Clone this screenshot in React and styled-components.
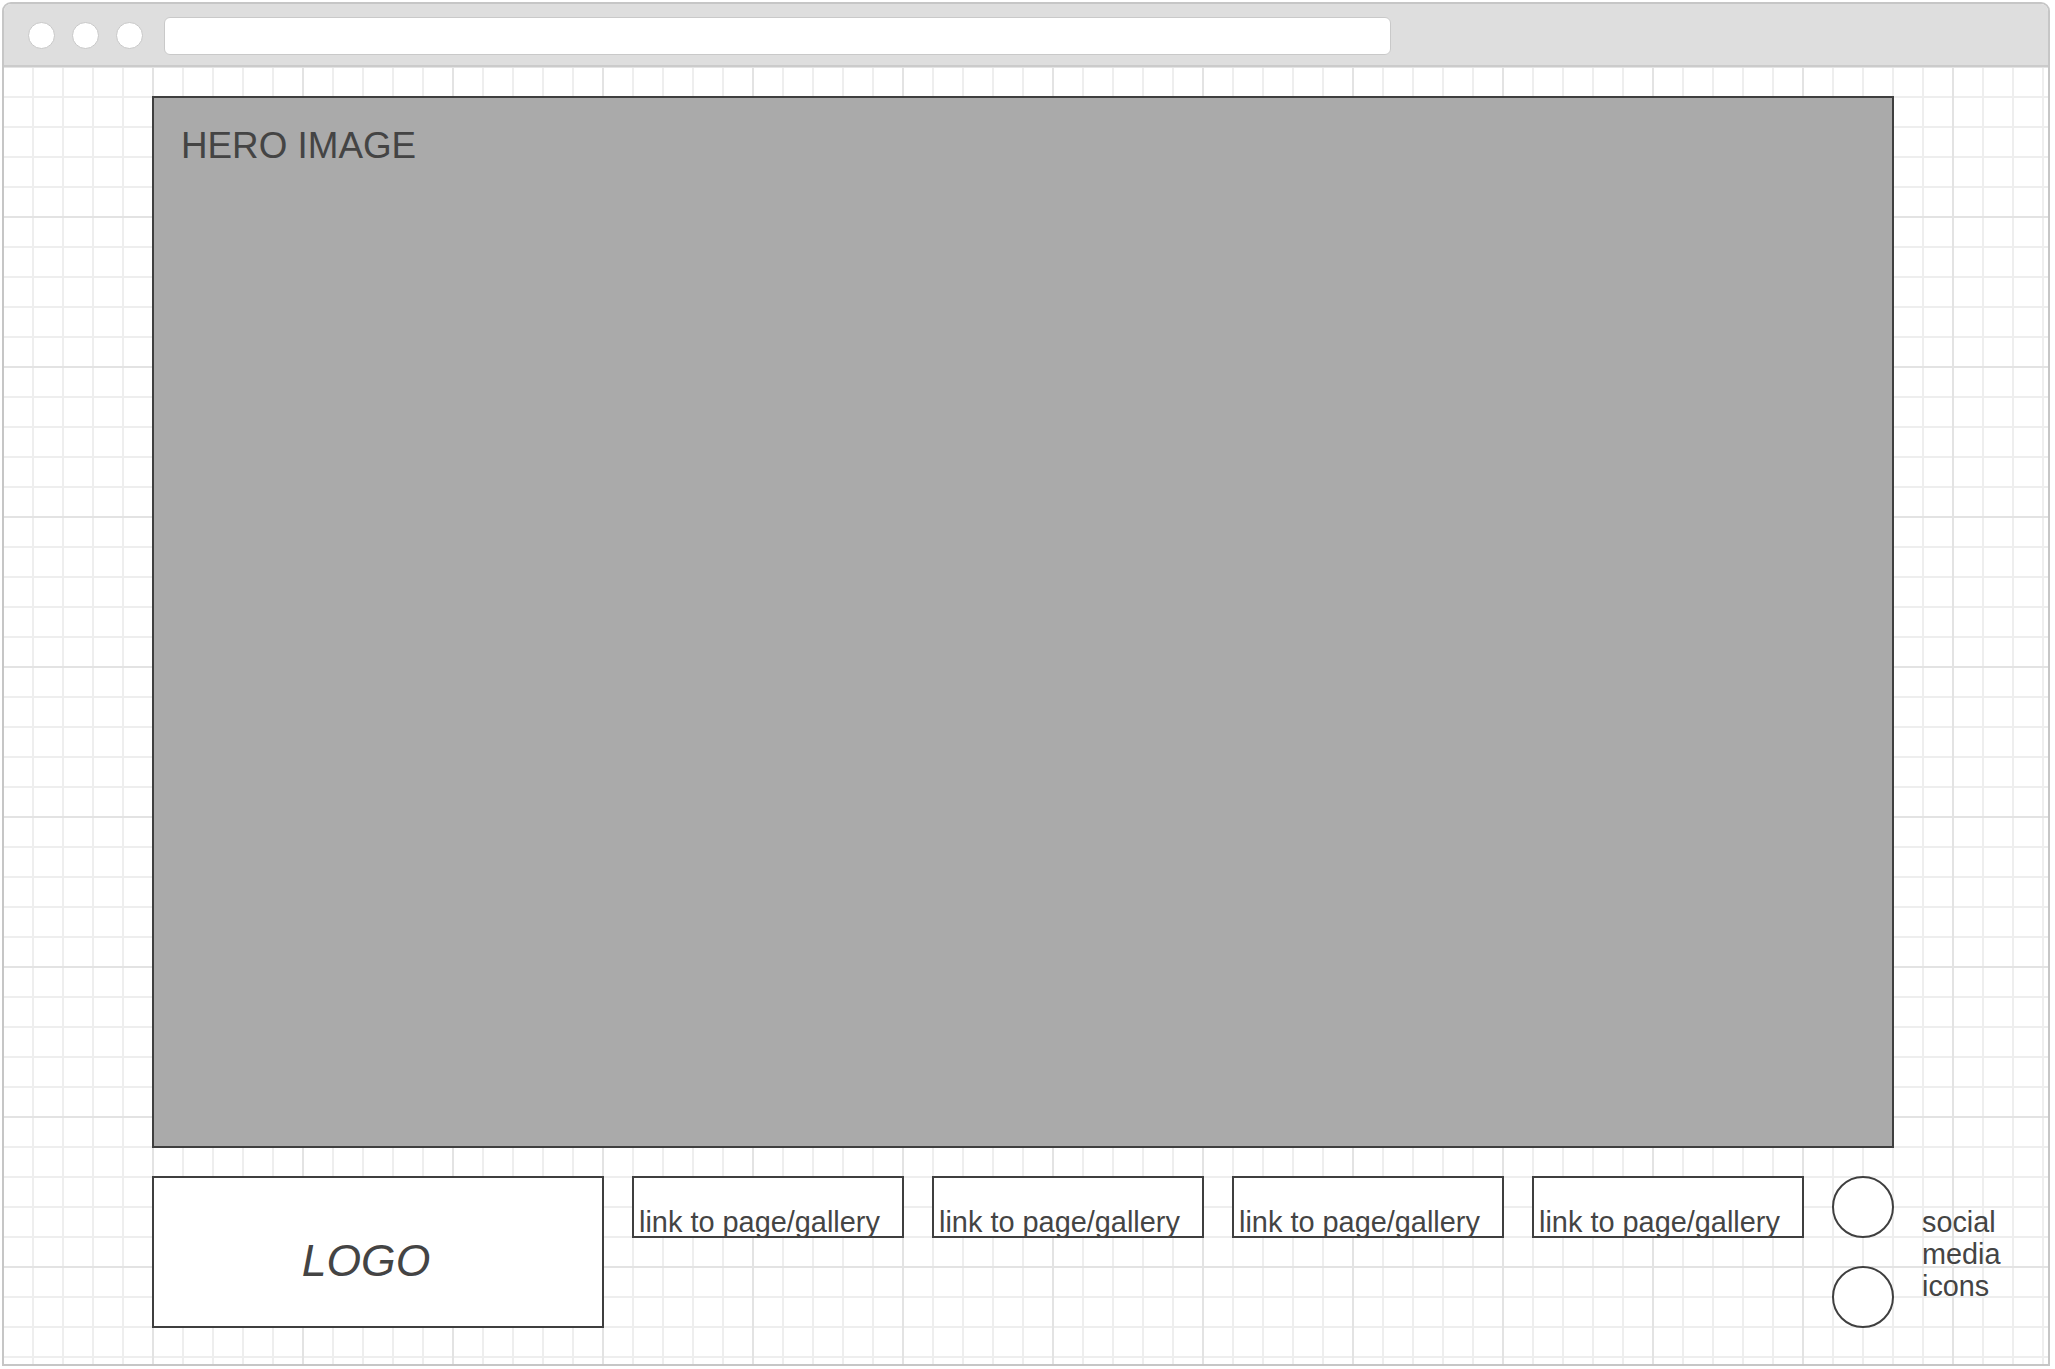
import React from "react";
import styled, { createGlobalStyle } from "styled-components";

const Global = createGlobalStyle`
  html, body { margin: 0; padding: 0; background: #ffffff; }
  body { font-family: "Liberation Sans", Arial, sans-serif; }
  * { box-sizing: border-box; }
`;

const Window = styled.div`
  margin: 2px 0 0 2px;
  width: 2048px;
  height: 1364px;
  border: 2px solid #c6c6c6;
  border-radius: 9px 9px 0 0;
  display: flex;
  flex-direction: column;
  overflow: hidden;
  background: #ffffff;
`;

const Toolbar = styled.div`
  height: 63px;
  flex: none;
  background: #dedede;
  border-bottom: 2px solid #cbcbcb;
  display: flex;
  align-items: center;
  padding: 2px 0 0 24px;
  gap: 17px;
`;

const Dot = styled.span`
  width: 27px;
  height: 27px;
  border-radius: 50%;
  background: #ffffff;
  border: 1.5px solid #c8c8c8;
  flex: none;
`;

const AddressBar = styled.div`
  margin-left: 4px;
  width: 1227px;
  height: 38px;
  background: #ffffff;
  border: 1px solid #c9c9c9;
  border-radius: 6px;
`;

const Canvas = styled.div`
  flex: 1;
  display: flex;
  flex-direction: column;
  gap: 28px;
  padding: 29px 0 0 148px;
  background-color: #ffffff;
  background-image:
    linear-gradient(to right, #e3e3e3 2px, transparent 2px),
    linear-gradient(to bottom, #e3e3e3 2px, transparent 2px),
    linear-gradient(to right, #eeeeee 2px, transparent 2px),
    linear-gradient(to bottom, #eeeeee 2px, transparent 2px);
  background-size: 150px 150px, 150px 150px, 30px 30px, 30px 30px;
  background-position: -2px -1px, -2px -1px, -2px -1px, -2px -1px;
`;

const Hero = styled.div`
  width: 1742px;
  height: 1052px;
  background: #aaaaaa;
  border: 2px solid #3f3f3f;
  padding: 30px 0 0 27px;
`;

const HeroLabel = styled.div`
  font-size: 36.8px;
  line-height: 36.8px;
  color: #444444;
`;

const BottomRow = styled.div`
  display: flex;
  align-items: flex-start;
  gap: 28px;
`;

const LogoBox = styled.div`
  width: 452px;
  height: 152px;
  background: #ffffff;
  border: 2px solid #3f3f3f;
  display: flex;
  align-items: center;
  justify-content: center;
  padding: 18px 24px 0 0;
  font-size: 44.5px;
  line-height: 44.5px;
  font-style: italic;
  color: #444444;
`;

const LinkBox = styled.div`
  width: 272px;
  height: 62px;
  background: #ffffff;
  border: 2px solid #3f3f3f;
  display: flex;
  align-items: flex-end;
  padding: 0 0 0 5px;
  font-size: 28.9px;
  line-height: 28px;
  color: #444444;
  white-space: nowrap;
`;

const SocialColumn = styled.div`
  display: flex;
  flex-direction: column;
  gap: 28px;
`;

const SocialCircle = styled.div`
  width: 62px;
  height: 62px;
  border-radius: 50%;
  border: 2px solid #3f3f3f;
  background: #ffffff;
`;

const SocialLabel = styled.div`
  margin-top: 30px;
  width: 100px;
  font-size: 28.8px;
  line-height: 32px;
  color: #444444;
`;

const links = ["link to page/gallery", "link to page/gallery", "link to page/gallery", "link to page/gallery"];

export default function App() {
  return (
    <>
      <Global />
      <Window>
        <Toolbar>
          <Dot />
          <Dot />
          <Dot />
          <AddressBar />
        </Toolbar>
        <Canvas>
          <Hero>
            <HeroLabel>HERO IMAGE</HeroLabel>
          </Hero>
          <BottomRow>
            <LogoBox>LOGO</LogoBox>
            {links.map((l, i) => (
              <LinkBox key={i}>{l}</LinkBox>
            ))}
            <SocialColumn>
              <SocialCircle />
              <SocialCircle />
            </SocialColumn>
            <SocialLabel>social media icons</SocialLabel>
          </BottomRow>
        </Canvas>
      </Window>
    </>
  );
}
